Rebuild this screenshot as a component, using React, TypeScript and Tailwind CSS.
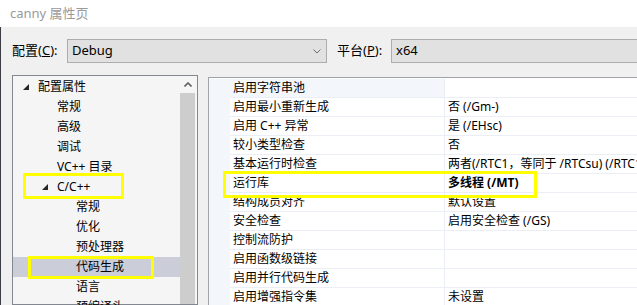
import React from 'react';

const treeRows = [
  { label: '配置属性', pad: 'pl-[10px]', arrow: true },
  { label: '常规', pad: 'pl-[44px]' },
  { label: '高级', pad: 'pl-[44px]' },
  { label: '调试', pad: 'pl-[44px]' },
  { label: 'VC++ 目录', pad: 'pl-[44px]' },
  { label: 'C/C++', pad: 'pl-[29px]', arrow: true },
  { label: '常规', pad: 'pl-[63px]' },
  { label: '优化', pad: 'pl-[63px]' },
  { label: '预处理器', pad: 'pl-[63px]' },
  { label: '代码生成', pad: 'pl-[63px]', selected: true },
  { label: '语言', pad: 'pl-[63px]' },
  { label: '预编译头', pad: 'pl-[63px]' },
];

const props: { name: string; value: string; bold?: boolean }[] = [
  { name: '启用字符串池', value: '' },
  { name: '启用最小重新生成', value: '否 (/Gm-)' },
  { name: '启用 C++ 异常', value: '是 (/EHsc)' },
  { name: '较小类型检查', value: '否' },
  { name: '基本运行时检查', value: '两者(/RTC1，等同于 /RTCsu) (/RTC1)' },
  { name: '运行库', value: '多线程 (/MT)', bold: true },
  { name: '结构成员对齐', value: '默认设置' },
  { name: '安全检查', value: '启用安全检查 (/GS)' },
  { name: '控制流防护', value: '' },
  { name: '启用函数级链接', value: '' },
  { name: '启用并行代码生成', value: '' },
  { name: '启用增强指令集', value: '未设置' },
];

const Expander = () => (
  <svg width="6" height="6" viewBox="0 0 6 6" className="shrink-0">
    <polygon points="6,0 6,6 0,6" fill="#262626" />
  </svg>
);

export default function App() {
  return (
    <div
      className="relative w-[637px] h-[305px] overflow-hidden flex flex-col bg-white text-black"
      style={{ fontFamily: '"Noto Sans", "Noto Sans CJK SC", sans-serif' }}
    >
      {/* 标题栏 */}
      <div className="h-[27px] shrink-0 flex items-center pl-[10px] text-[13px] text-[#9a9a9a]">
        canny 属性页
      </div>

      <div className="flex-1 flex flex-col bg-[#f0f0f0] border-l border-[#3a3d44] min-h-0">
        {/* 配置 / 平台 */}
        <div className="flex items-center pl-[11px] pt-[12px] text-[13px] shrink-0 overflow-hidden">
          <span className="w-[55px] shrink-0 whitespace-nowrap">
            配置(<u>C</u>):
          </span>
          <div className="w-[260px] shrink-0 h-[24px] border border-[#adadad] bg-[#e1e1e1] flex items-center justify-between pl-[4px] pr-[5px]">
            <span>Debug</span>
            <svg width="8" height="5" viewBox="0 0 8 5">
              <path d="M0.5 0.5 L4 4 L7.5 0.5" fill="none" stroke="#6d6d6d" strokeWidth="1" />
            </svg>
          </div>
          <span className="ml-[10px] w-[54px] shrink-0 whitespace-nowrap">
            平台(<u>P</u>):
          </span>
          <div className="w-[260px] h-[24px] border border-[#adadad] bg-[#e1e1e1] flex items-center pl-[4px] shrink-0">
            x64
          </div>
        </div>

        <div className="flex mt-[12px] pl-[11px] flex-1 min-h-0">
          {/* 树 */}
          <div className="w-[186px] shrink-0 border border-[#828790] bg-[#f5f5f5] flex">
            <div className="w-[167px] pt-[1px] text-[12px]">
              {treeRows.map((r, i) => (
                <div
                  key={i}
                  className={`h-[20px] flex items-center whitespace-nowrap ${r.pad} ${r.selected ? 'bg-[#cbcdd9]' : ''}`}
                >
                  {r.arrow && <Expander />}
                  <span className={r.arrow ? 'ml-[9px]' : ''}>{r.label}</span>
                </div>
              ))}
            </div>
            <div className="w-[17px] flex flex-col">
              <div className="h-[17px] w-[15px] flex items-center justify-center">
                <svg width="8" height="5" viewBox="0 0 8 5">
                  <path d="M0.5 4.5 L4 1 L7.5 4.5" fill="none" stroke="#606060" strokeWidth="1.6" />
                </svg>
              </div>
              <div className="flex-1 w-[15px] bg-[#cdcdcd]" />
            </div>
          </div>

          {/* 属性网格 */}
          <div className="ml-[10px] mt-[2px] flex-1 border-l border-t border-[#a0a3aa] bg-white text-[12px] pt-[1px] min-w-0">
            {props.map((p, i) => (
              <div key={i} className="h-[19px] flex">
                <div className="w-[21px] shrink-0 bg-[#f3f6fb]" />
                <div
                  className={`w-[215px] shrink-0 border-b border-r border-[#ebeef4] flex items-center pl-[3px] whitespace-nowrap ${i === 0 ? 'bg-[#f3f6fb]' : ''}`}
                >
                  {p.name}
                </div>
                <div
                  className={`flex-1 border-b border-[#ebeef4] flex items-center pl-[3px] whitespace-nowrap overflow-hidden ${p.bold ? 'font-bold' : ''}`}
                >
                  {p.value}
                </div>
              </div>
            ))}
          </div>
        </div>
      </div>

      {/* 标注框 */}
      <div className="absolute left-[23px] top-[173px] w-[101px] h-[26px] border-[3px] border-[#ffff00]" />
      <div className="absolute left-[28px] top-[256px] w-[126px] h-[23px] border-[3px] border-[#ffff00]" />
      <div className="absolute left-[223px] top-[171px] w-[314px] h-[27px] border-[3px] border-[#ffff00]" />
    </div>
  );
}
